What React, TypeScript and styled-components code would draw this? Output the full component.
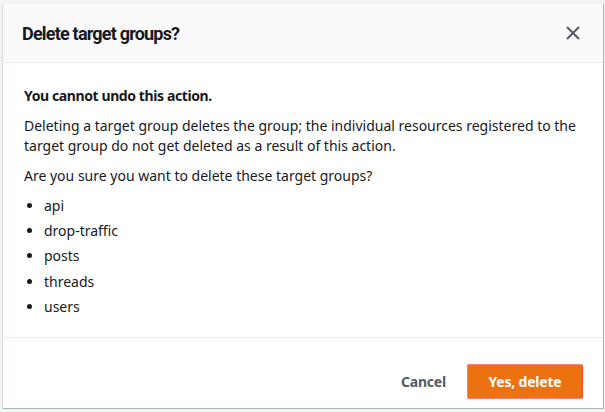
import React from "react";
import styled, { createGlobalStyle } from "styled-components";

const GlobalStyle = createGlobalStyle`
  html, body {
    margin: 0;
    padding: 0;
    background: #eef0f0;
    font-family: "Noto Sans", "Open Sans", Arial, sans-serif;
  }
`;

const Backdrop = styled.div`
  width: 605px;
  height: 412px;
  padding: 4px 1px 4px 3px;
  box-sizing: border-box;
  background: #f2f3f3;
`;

const Dialog = styled.div`
  height: 100%;
  display: flex;
  flex-direction: column;
  background: #ffffff;
  border-right: 1px solid #aab7b8;
  border-bottom: 1px solid #aab7b8;
  box-shadow: -1px 0 0 #d5dbdb;
`;

const Header = styled.div`
  height: 58px;
  display: flex;
  align-items: center;
  justify-content: space-between;
  padding: 0 20px 0 19px;
  background: #fafafa;
  border-bottom: 1px solid #eaeded;
`;

const Title = styled.h2`
  margin: 0;
  font-family: Roboto, "Noto Sans", sans-serif;
  font-size: 18px;
  font-weight: 700;
  color: #16191f;
  letter-spacing: -0.8px;
`;

const CloseButton = styled.button`
  border: 0;
  background: none;
  padding: 0;
  width: 20px;
  height: 20px;
  display: flex;
  align-items: center;
  justify-content: center;
  color: #545b64;
`;

const Body = styled.div`
  flex: 1;
  padding: 23px 20px 0 21px;
  font-size: 14px;
  line-height: 20px;
  color: #16191f;
  border-bottom: 1px solid #eaeded;
`;

const Paragraph = styled.p<{ $bold?: boolean }>`
  margin: 0 0 10px;
  font-weight: ${(p) => (p.$bold ? 700 : 400)};
  letter-spacing: ${(p) => (p.$bold ? "-0.4px" : "0")};
`;

const List = styled.ul`
  margin: 0;
  padding: 0 0 0 20px;
`;

const Item = styled.li`
  line-height: 20px;
  margin-bottom: 5.2px;
`;

const Footer = styled.div`
  height: 70px;
  display: flex;
  align-items: flex-end;
  justify-content: flex-end;
  gap: 1px;
  padding: 0 20px 9px 0;
  box-sizing: border-box;
`;

const Button = styled.button<{ $primary?: boolean }>`
  font-family: inherit;
  font-size: 14px;
  font-weight: 700;
  height: 35px;
  padding: 0 20px;
  border-radius: 2px;
  white-space: nowrap;
  letter-spacing: -0.2px;
  cursor: pointer;
  ${(p) =>
    p.$primary
      ? `
    background: #ec7211;
    color: #ffffff;
    border: 1px solid #f7807a;
    border-right-color: #ff4b14;
    min-width: 116px;
  `
      : `
    background: none;
    color: #545b64;
    border: 0;
  `}
`;

const groups = ["api", "drop-traffic", "posts", "threads", "users"];

export default function App() {
  return (
    <>
      <GlobalStyle />
      <Backdrop>
        <Dialog>
          <Header>
            <Title>Delete target groups?</Title>
            <CloseButton aria-label="Close">
              <svg width="14" height="14" viewBox="0 0 14 14">
                <path d="M1 1 L13 13 M13 1 L1 13" stroke="currentColor" strokeWidth="2" />
              </svg>
            </CloseButton>
          </Header>
          <Body>
            <Paragraph $bold>You cannot undo this action.</Paragraph>
            <Paragraph>
              Deleting a target group deletes the group; the individual resources registered to the
              target group do not get deleted as a result of this action.
            </Paragraph>
            <Paragraph>Are you sure you want to delete these target groups?</Paragraph>
            <List>
              {groups.map((g) => (
                <Item key={g}>{g}</Item>
              ))}
            </List>
          </Body>
          <Footer>
            <Button>Cancel</Button>
            <Button $primary>Yes, delete</Button>
          </Footer>
        </Dialog>
      </Backdrop>
    </>
  );
}
